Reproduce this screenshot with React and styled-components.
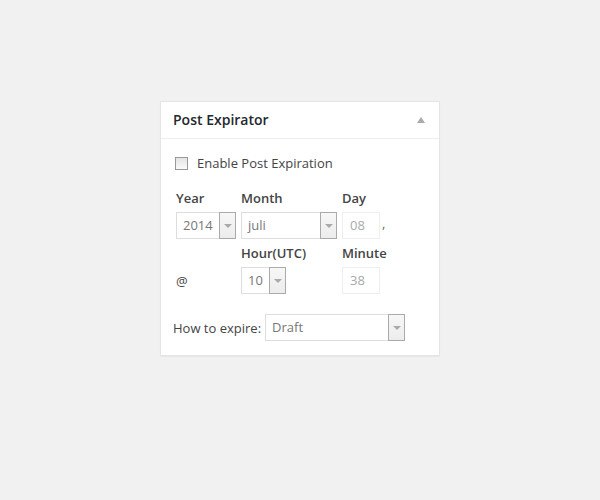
import React from "react"
import styled, { createGlobalStyle } from "styled-components"

const Global = createGlobalStyle`
  html, body {
    margin: 0;
    padding: 0;
    background: #f1f1f1;
  }
  body {
    font-family: "Open Sans", "Liberation Sans", sans-serif;
    font-size: 13px;
    color: #444;
  }
`

const Page = styled.div`
  width: 600px;
  height: 500px;
  padding-top: 101px;
  box-sizing: border-box;
`

const Box = styled.div` // postbox
  width: 280px;
  margin-left: 160px;
  background: #fff;
  border: 1px solid #e5e5e5;
  box-shadow: 0 1px 1px rgba(0, 0, 0, 0.04);
  box-sizing: border-box;
`

const Header = styled.div`
  height: 37px;
  display: flex;
  align-items: center;
  justify-content: space-between;
  padding: 0 12px 1px 12px;
  border-bottom: 1px solid #eee;
  box-sizing: border-box;
`

const Title = styled.h3`
  margin: 0;
  font-size: 14px;
  font-weight: 600;
  color: #23282d;
`

const Toggle = styled.span`
  width: 0;
  height: 0;
  border-left: 4px solid transparent;
  border-right: 4px solid transparent;
  border-bottom: 6px solid #aaa;
  margin-right: 2px;
`

const Body = styled.div`
  padding: 14px 12px 14px 12px;
`

const CheckRow = styled.label`
  display: flex;
  align-items: center;
  height: 20px;
  margin-left: 2px;
`

const Check = styled.span`
  width: 11px;
  height: 11px;
  border: 1px solid #999;
  background: linear-gradient(#e4e4e4, #fafafa);
  margin-right: 9px;
`

const Grid = styled.div` // 날짜 표
  display: grid;
  grid-template-columns: 65px 101px auto;
  grid-auto-rows: 18px 27px;
  row-gap: 5px;
  margin: 16px 0 0 3px;
`

const Label = styled.div`
  font-weight: 600;
  line-height: 18px;
  color: #444;
  align-self: end;
`

const Cell = styled.div`
  display: flex;
  align-items: center;
`

const Select = styled.div`
  display: flex;
  width: ${p => p.w}px;
  height: 27px;
  border: 1px solid #ddd;
  box-sizing: border-box;
  background: #fff;
`

const Value = styled.span`
  flex: 1;
  padding-left: 6px;
  line-height: 25px;
  color: #777;
`

const Arrow = styled.span`
  width: 17px;
  height: 27px;
  margin: -1px -1px -1px 0;
  border: 1px solid #aaa;
  box-sizing: border-box;
  background: linear-gradient(#f7f7f7, #ececec);
  display: flex;
  align-items: center;
  justify-content: center;
  &::after {
    content: "";
    border-left: 4px solid transparent;
    border-right: 4px solid transparent;
    border-top: 4px solid #aaa;
  }
`

const Input = styled.div`
  width: 38px;
  height: 27px;
  border: 1px solid #eee;
  box-sizing: border-box;
  padding-left: 7px;
  line-height: 25px;
  color: #aaa;
`

const Comma = styled.span`
  margin: -6px 0 0 2px;
  color: #666;
  line-height: 18px;
`

const ExpireRow = styled.div`
  display: flex;
  align-items: center;
  margin-top: 20px;
  gap: 4px;
`

function App() {
  return (
    <Page>
      <Global />
      <Box>
        <Header>
          <Title>Post Expirator</Title>
          <Toggle />
        </Header>
        <Body>
          <CheckRow>
            <Check />
            Enable Post Expiration
          </CheckRow>
          <Grid>
            <Label>Year</Label>
            <Label>Month</Label>
            <Label>Day</Label>
            <Cell>
              <Select w={60}><Value>2014</Value><Arrow /></Select>
            </Cell>
            <Cell>
              <Select w={96}><Value>juli</Value><Arrow /></Select>
            </Cell>
            <Cell>
              <Input>08</Input><Comma>,</Comma>
            </Cell>
            <Label></Label>
            <Label>Hour(UTC)</Label>
            <Label>Minute</Label>
            <Cell>@</Cell>
            <Cell>
              <Select w={45}><Value>10</Value><Arrow /></Select>
            </Cell>
            <Cell>
              <Input>38</Input>
            </Cell>
          </Grid>
          <ExpireRow>
            How to expire:
            <Select w={140}><Value>Draft</Value><Arrow /></Select>
          </ExpireRow>
        </Body>
      </Box>
    </Page>
  )
}

export default App
